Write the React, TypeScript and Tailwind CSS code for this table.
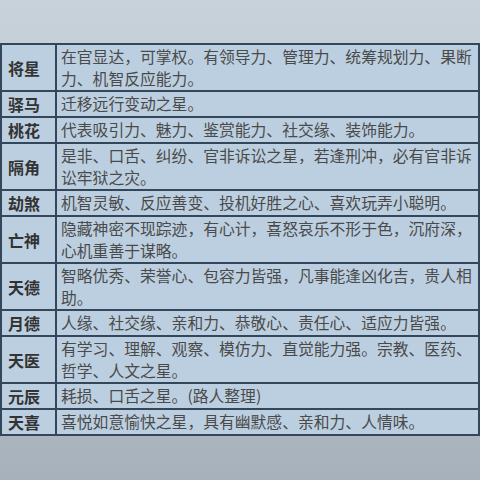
const rows: { name: string; lines: string[] }[] = [
  { name: "将星", lines: ["在官显达，可掌权。有领导力、管理力、统筹规划力、果断", "力、机智反应能力。"] },
  { name: "驿马", lines: ["迁移远行变动之星。"] },
  { name: "桃花", lines: ["代表吸引力、魅力、鉴赏能力、社交缘、装饰能力。"] },
  { name: "隔角", lines: ["是非、口舌、纠纷、官非诉讼之星，若逢刑冲，必有官非诉", "讼牢狱之灾。"] },
  { name: "劫煞", lines: ["机智灵敏、反应善变、投机好胜之心、喜欢玩弄小聪明。"] },
  { name: "亡神", lines: ["隐藏神密不现踪迹，有心计，喜怒哀乐不形于色，沉府深，", "心机重善于谋略。"] },
  { name: "天德", lines: ["智略优秀、荣誉心、包容力皆强，凡事能逢凶化吉，贵人相", "助。"] },
  { name: "月德", lines: ["人缘、社交缘、亲和力、恭敬心、责任心、适应力皆强。"] },
  { name: "天医", lines: ["有学习、理解、观察、模仿力、直觉能力强。宗教、医药、", "哲学、人文之星。"] },
  { name: "元辰", lines: ["耗损、口舌之星。(路人整理)"] },
  { name: "天喜", lines: ["喜悦如意愉快之星，具有幽默感、亲和力、人情味。"] },
];

export default function App() {
  return (
    <div
      className="w-[480px] h-[480px] overflow-hidden flex flex-col bg-gradient-to-b from-[#c7d2db] via-[#b9c6d0] to-[#a6b1bb]"
      style={{ fontFamily: '"Noto Sans CJK SC", "Noto Sans", sans-serif' }}
    >
      <div className="h-[43px] shrink-0" />
      <div className="border-x-2 border-b-2 border-[#34465a] bg-[#bccfe0]">
        {rows.map((row) => (
          <div key={row.name} className="flex border-t-2 border-[#34465a]">
            <div className="w-[55px] shrink-0 border-r-2 border-[#34465a] flex items-center pl-[6px] text-[16px] font-semibold text-[#333]">
              {row.name}
            </div>
            <div
              className={
                "flex-1 pl-[4px] flex flex-col justify-center text-[15.8px] leading-[22px] text-[#4a4a4a] whitespace-nowrap " +
                (row.lines.length > 1 ? "h-[45px]" : "h-[24px]")
              }
            >
              {row.lines.map((l, i) => (
                <span key={i}>{l}</span>
              ))}
            </div>
          </div>
        ))}
      </div>
    </div>
  );
}
